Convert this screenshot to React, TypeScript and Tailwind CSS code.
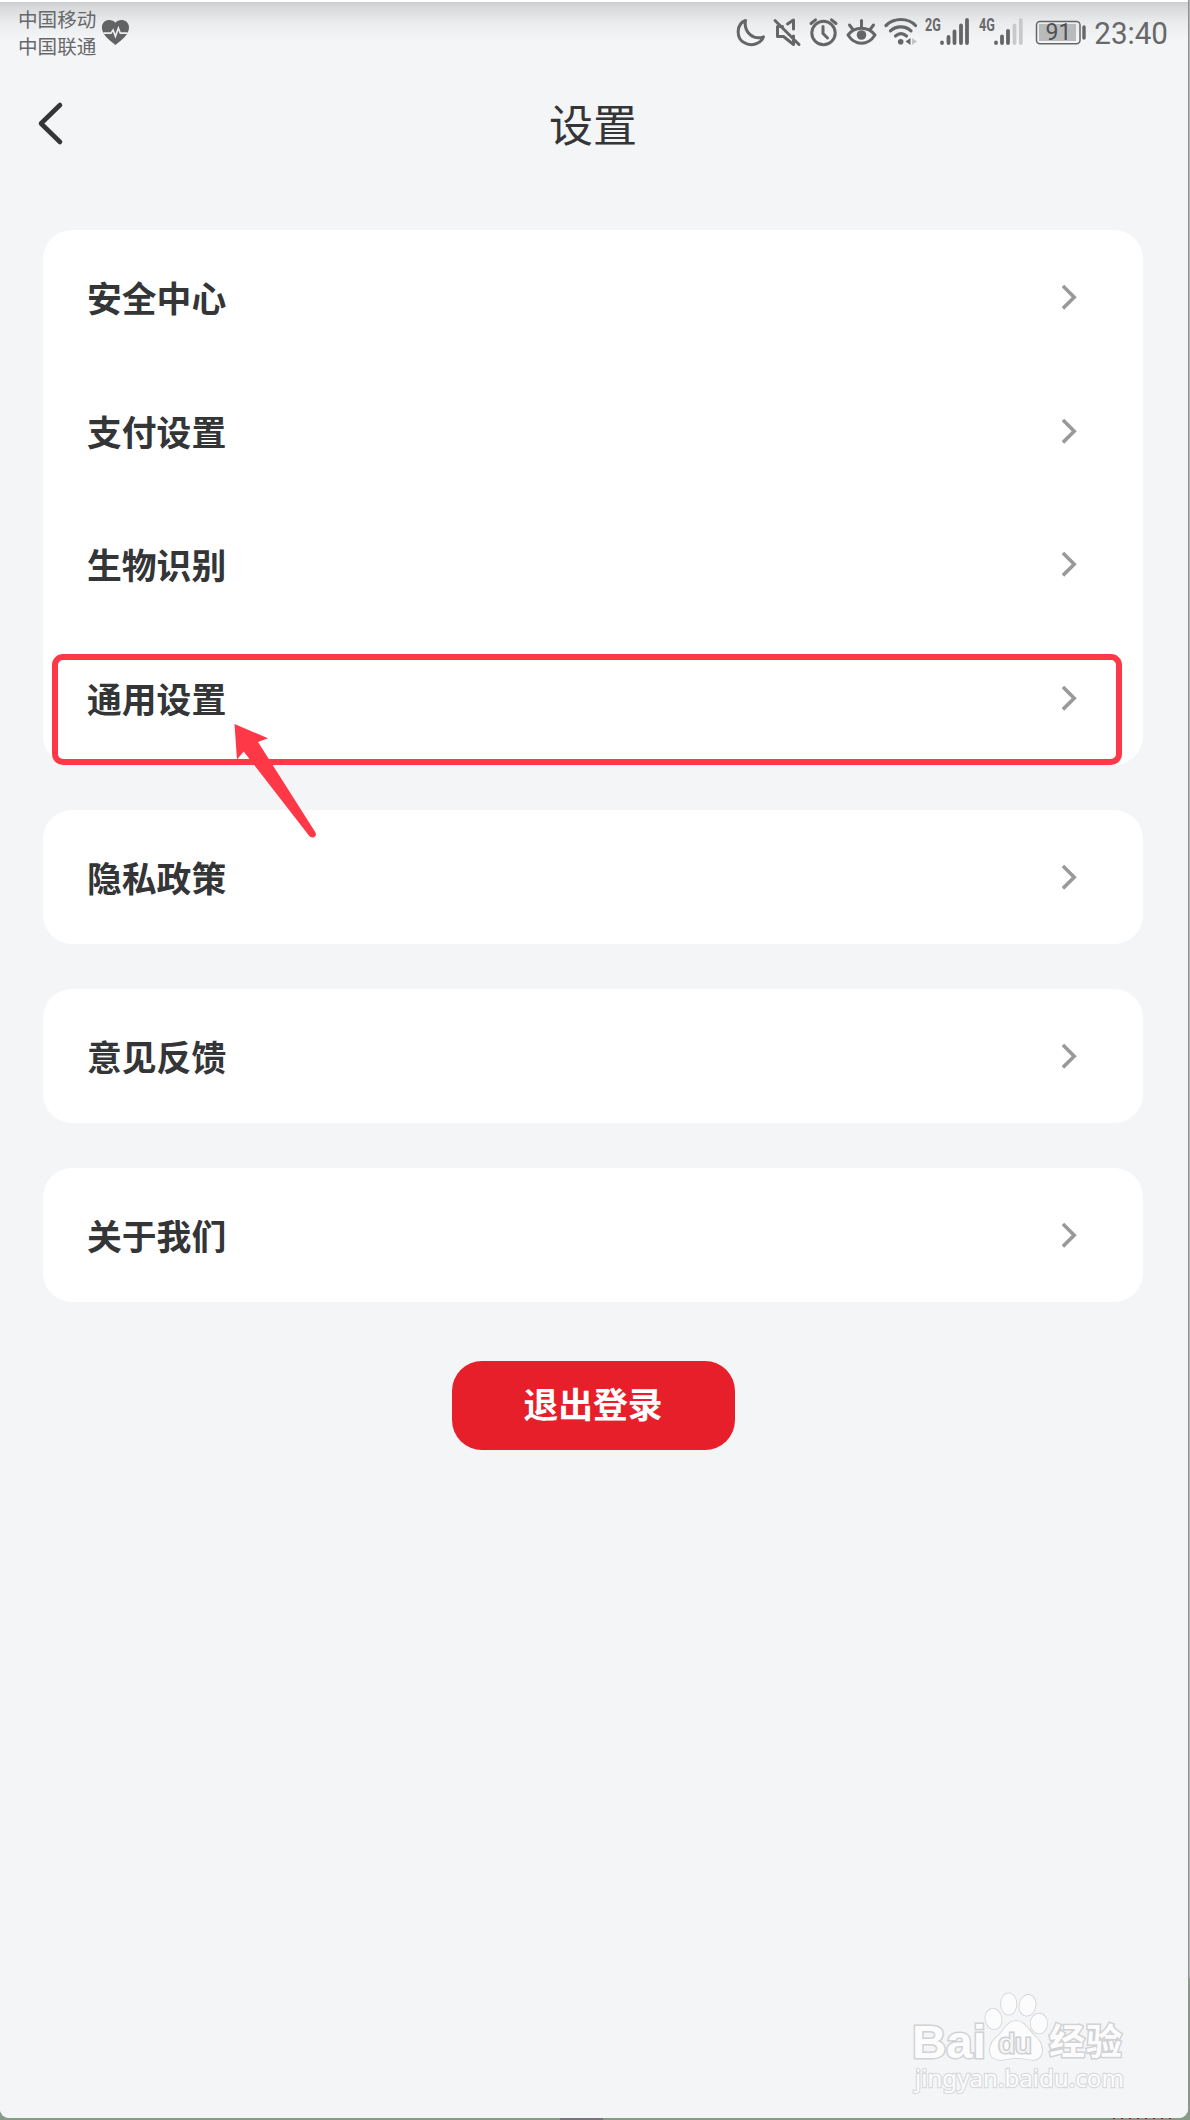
import React from "react";

function Chevron() {
  return (
    <svg className="h-[28px] w-[18px]" viewBox="0 0 18 28" fill="none" stroke="#98999b" strokeWidth="3.6">
      <path d="M2.2 4.2 L12.2 14.2 L2.2 24.2" strokeLinecap="square" />
    </svg>
  );
}

function Row({ label }: { label: string }) {
  return (
    <div className="flex h-[133.8px] items-center justify-between pl-[44px] pr-[63px]">
      <span className="text-[34.8px] font-bold leading-[50px] text-[#343537]">{label}</span>
      <Chevron />
    </div>
  );
}

function Card({ items }: { items: string[] }) {
  return (
    <div className="rounded-[29px] bg-white">
      {items.map((i) => (
        <Row key={i} label={i} />
      ))}
    </div>
  );
}

function StatusIcons() {
  return (
    <svg className="absolute left-[730px] top-[8px] h-[44px] w-[360px]" viewBox="730 10 360 44" fill="none" stroke="#656668" strokeWidth="3" strokeLinecap="round" strokeLinejoin="round">
      <path d="M745.5 20.5 C736 24 736 38 744 42.5 C751 47 761 44 763.5 36.8 C753 40.5 743.5 32 745.5 20.5Z" />
      <path d="M782.5 26.5 H777.5 V36.5 H783.5 L793.5 44.5 V36 M787.5 24 L793.5 20 V29 M775 20.5 L799 44.5" />
      <circle cx="823.5" cy="33" r="11.7" />
      <path d="M823 26.5 V33.5 L827.5 38 M811 23.5 L815.5 19.8 M831.5 19.8 L836 23.5" />
      <path d="M848 35 C855 26 868 26 875 35 C868 46 855 46 848 35Z M861.5 20.5 V27 M849.5 25 L852.5 29 M873.5 25 L870.5 29" />
      <circle cx="861.5" cy="35" r="4.8" fill="#656668" stroke="none" />
      <path d="M886 25.5 C894 17.5 908 17.5 915.5 25.5 M890.5 30.8 C896 25.5 905.5 25.5 911 30.8 M895.5 36 C899 33 903 33 906.5 36" strokeWidth="3.2" />
      <circle cx="900.7" cy="41.7" r="2.8" fill="#656668" stroke="none" />
      <path d="M910.5 38 V45 L905.5 41.5Z" fill="#656668" stroke="none" />
      <path d="M912 38 V45 L917 41.5Z" fill="#c3c4c6" stroke="none" />
      <g strokeWidth="3.8">
        <path d="M942 42.5 V43 M948.5 37 V43 M954.5 31.5 V43 M961 25.5 V43 M967 20 V43" />
        <path d="M996 42.5 V43 M1002 36.5 V43 M1008 30.8 V43" />
        <path d="M1014.5 25.5 V43 M1020.8 20 V43" stroke="#c8c9cb" />
      </g>
      <rect x="1036.5" y="21.5" width="43.5" height="22.2" rx="3.5" strokeWidth="1.5" />
      <rect x="1039" y="24" width="37" height="17" fill="#b9babc" stroke="none" />
      <path d="M1084 27 V38" strokeWidth="3.4" />
    </svg>
  );
}

function StatusBar() {
  return (
    <header className="relative flex h-[58px] justify-between text-[#67686a]">
      <div className="ml-[18px] mt-[3px] flex items-start">
        <div className="text-[19.6px] leading-[27px]">
          <div>中国移动</div>
          <div>中国联通</div>
        </div>
        <svg className="ml-[5px] mt-[14px] h-[27px] w-[29px]" viewBox="0 0 29 28">
          <path d="M14.4 27 C9 22.5 .4 16.5 .4 8.8 C.4 .5 10.5 -1 14.4 4 C18 -1 28.5 .5 28.5 8.8 C28.5 16.5 20 22.5 14.4 27Z" fill="#626365" />
          <path d="M2 14.7 H9.8 L12 11.5 L14.4 18 L17.5 9.5 L19.5 14.7 H27" fill="none" stroke="#edeef0" strokeWidth="1.7" />
        </svg>
      </div>
      <StatusIcons />
      <span className="absolute left-[925px] top-[13px] origin-left scale-x-[0.72] font-[Roboto,sans-serif] text-[17.5px] font-bold leading-[20px]">2G</span>
      <span className="absolute left-[979px] top-[13px] origin-left scale-x-[0.72] font-[Roboto,sans-serif] text-[17.5px] font-bold leading-[20px]">4G</span>
      <span className="absolute left-[1045.5px] top-[18px] font-[Roboto,sans-serif] text-[23px] leading-[25px] text-[#4f5052]">91</span>
      <span className="mr-[20px] mt-[13px] origin-right scale-x-[0.97] font-[Roboto,sans-serif] text-[30.5px] leading-[38px]">23:40</span>
    </header>
  );
}

function Watermark() {
  return (
    <svg className="absolute left-[905px] top-[1985px] h-[115px] w-[230px]" viewBox="905 1985 230 115" fill="#fcfcfd" stroke="#d0d2d4" strokeWidth="1.6" paintOrder="stroke">
      <text x="912" y="2057.5" fontSize="46" fontFamily="Liberation Sans, sans-serif" fontWeight="700" textLength="74" lengthAdjust="spacingAndGlyphs" strokeWidth="3">Bai</text>
      <ellipse cx="993.5" cy="2019" rx="8" ry="10.3" transform="rotate(-12 993.5 2019)" />
      <ellipse cx="1008.7" cy="2004" rx="7.7" ry="10.8" />
      <ellipse cx="1027.5" cy="2005.3" rx="8" ry="10.5" transform="rotate(12 1027.5 2005.3)" />
      <ellipse cx="1039" cy="2023.5" rx="8.3" ry="10" />
      <path d="M1016 2021 C1007 2021 1004 2031 998 2036 C988 2043 987 2057 997 2059.5 C1004 2061 1009 2058 1017 2058 C1025 2058 1030 2061 1036 2059.5 C1045 2056 1043 2043 1036 2037 C1029 2032 1026 2021 1016 2021Z" />
      <text x="998.5" y="2053" fontSize="28" fontFamily="Liberation Sans, sans-serif" textLength="33" lengthAdjust="spacingAndGlyphs" fill="#f3f4f6" stroke="#cdcfd1" strokeWidth="3">du</text>
      <text x="1049" y="2055" fontSize="36" fontFamily="Noto Sans CJK SC, sans-serif" fontWeight="700" textLength="73" strokeWidth="3">经验</text>
      <text x="915" y="2087" fontSize="24" fontFamily="Noto Sans, sans-serif" textLength="209" lengthAdjust="spacingAndGlyphs" stroke="#d8dadc" strokeWidth="2.4">jingyan.baidu.com</text>
    </svg>
  );
}

// Desktop visible behind the phone window's right and bottom edges.
function Backdrop() {
  return (
    <>
      <div className="absolute right-0 top-0 h-[1978px] w-[20px] bg-[linear-gradient(to_right,#8f9092_0_19px,#b4b5b7_19px)]" />
      <div className="absolute bottom-0 left-[560px] h-[6px] w-[43px] bg-[#77747f]" />
      <div className="absolute bottom-[1px] left-[1113px] h-px w-[60px] bg-[repeating-linear-gradient(to_right,#b01818_0_2px,transparent_2px_8px)]" />
    </>
  );
}

export default function App() {
  return (
    <div className="relative h-[2120px] w-[1190px] overflow-hidden bg-[#879c87] font-['Noto_Sans_CJK_SC',sans-serif]">
      <Backdrop />
      <div className="relative h-[2118px] w-[1188px] rounded-b-[9px] border-t-2 border-white bg-[#f4f5f7] bg-[linear-gradient(to_bottom,#cdced0_0px,#d9dadc_6px,#eaebed_20px,#f4f5f7_38px)] bg-origin-padding">
        <StatusBar />
        <div className="relative flex h-[128px] items-center justify-center">
          <svg className="absolute left-[36px] top-[40px] h-[48px] w-[30px]" viewBox="36 100 30 48" fill="none" stroke="#343537" strokeWidth="4.6" strokeLinecap="round" strokeLinejoin="round">
            <path d="M60 105 L41 123.5 L60 142" />
          </svg>
          <h1 className="-ml-[2px] -mt-[2px] text-[44px] leading-[60px] text-[#343537]">设置</h1>
        </div>
        <main className="ml-[43px] mt-[42px] flex w-[1100px] flex-col gap-[45px]">
          <Card items={["安全中心", "支付设置", "生物识别", "通用设置"]} />
          <Card items={["隐私政策"]} />
          <Card items={["意见反馈"]} />
          <Card items={["关于我们"]} />
          <button className="mt-[14px] h-[89px] w-[283px] self-center rounded-[30px] bg-[#e71f2a] pb-[4px] text-[34.8px] font-bold leading-[50px] text-white">
            退出登录
          </button>
        </main>
      </div>
      <div className="absolute left-[52px] top-[654px] h-[111px] w-[1070px] rounded-[11px] border-[6px] border-[#ff3847]" />
      <svg className="absolute left-[230px] top-[720px] h-[122px] w-[90px]" viewBox="230 720 90 122" fill="#ff3847">
        <path d="M234.5 724 L268 738.3 L258 742 L315.5 832.5 Q317 836 313.5 837.5 Q310.5 838 308.5 835 L243.7 751.5 L237 759.5Z" />
      </svg>
      <Watermark />
    </div>
  );
}
